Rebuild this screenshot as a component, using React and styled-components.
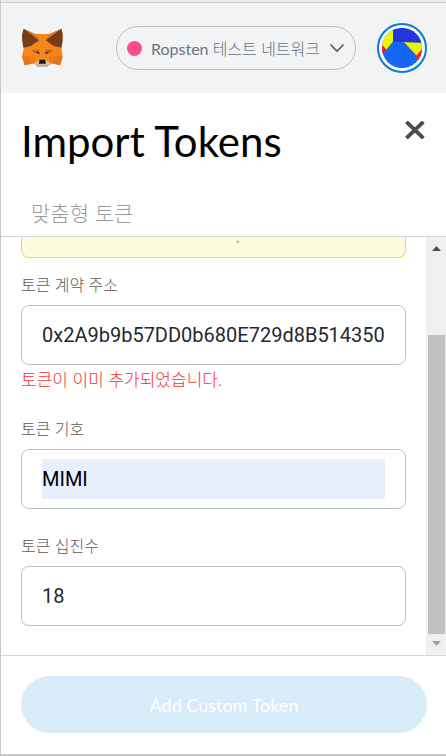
import { useState } from "react"
import styled, { createGlobalStyle } from "styled-components"

export default function App() {
    const [address, setAddress] = useState("0x2A9b9b57DD0b680E729d8B514350")
    const [symbol, setSymbol] = useState("MIMI")
    const [decimals, setDecimals] = useState("18")

    return (
        <Popup>
            <GlobalStyle />
            <TopEdge />
            <AppHeader>
                <FoxLogo />
                <Network type="button">
                    <Dot />
                    <span>Ropsten <em>테스트 네트워크</em></span>
                    <svg width="16" height="10" viewBox="0 0 16 10" fill="none" stroke="#4d5157" strokeWidth="1.6">
                        <path d="M1.5 1.5L8 8.2l6.5-6.7" />
                    </svg>
                </Network>
                <Account type="button" aria-label="Account">
                    <Jazzicon />
                </Account>
            </AppHeader>

            <PageHeader>
                <TitleRow>
                    <h1>Import Tokens</h1>
                    <Close type="button" aria-label="Close">
                        <svg width="20" height="18" viewBox="0 0 20 18" stroke="#4d4d4d" strokeWidth="3.8">
                            <path d="M1.4 0.8l17 16.4M18.4 0.8L1.4 17.2" />
                        </svg>
                    </Close>
                </TitleRow>
                <Tab type="button">맞춤형 토큰</Tab>
            </PageHeader>

            <Content>
                <Form>
                    <Notice>
                        <a href="#more">,</a>
                    </Notice>
                    <Fields>
                        <Field>
                            <label htmlFor="address">토큰 계약 주소</label>
                            <InputBox>
                                <input id="address" value={address} onChange={(e) => setAddress(e.target.value)} />
                            </InputBox>
                            <ErrorText>토큰이 이미 추가되었습니다.</ErrorText>
                        </Field>
                        <Field>
                            <label htmlFor="symbol">토큰 기호</label>
                            <InputBox $filled>
                                <input id="symbol" value={symbol} onChange={(e) => setSymbol(e.target.value)} />
                            </InputBox>
                        </Field>
                        <Field>
                            <label htmlFor="decimals">토큰 십진수</label>
                            <InputBox>
                                <input id="decimals" value={decimals} onChange={(e) => setDecimals(e.target.value)} />
                            </InputBox>
                        </Field>
                    </Fields>
                </Form>
                <ScrollBar>
                    <Arrow viewBox="0 0 9 5" fill="#505050"><path d="M0 5L4.5 0 9 5z" /></Arrow>
                    <Thumb />
                    <Arrow viewBox="0 0 9 5" fill="#a3a3a3"><path d="M0 0l4.5 5L9 0z" /></Arrow>
                </ScrollBar>
            </Content>

            <Footer>
                <button type="button" disabled>Add Custom Token</button>
            </Footer>
        </Popup>
    )
}

function FoxLogo() {
    return (
        <svg width="42" height="40" viewBox="63 84 126 120" role="img" aria-label="MetaMask">
            <path fill="#f6851b" d="M71 86l34 16h44l35-16 4 18-4 38 4 27-7 27-26-7-14 11h-27l-14-11-26 7-8-27 6-28-6-24z" />
            <path fill="#e4761b" d="M71 86l34 16 12 19zM184 86l-35 16-12 19z" />
            <path fill="#763d16" d="M71 86l46 35-24 17-23 5-3-20-1-19zM184 86l-47 35 24 17 23 5 4-20v-19z" />
            <path fill="#e4761b" d="M66 169h24l13 21-29 6zM188 169h-23l-13 21 29 6z" />
            <path fill="#cd6116" d="M93 170l10-1 3 14zM162 170l-10-1-3 14zM96 150l21-1 3 15-22-8zM158 150l-21-1-3 15 22-8z" />
            <path fill="#f6851b" d="M90 147l14 25-1 5-13-7zM164 147l-13 25 1 5 12-7z" />
            <path fill="#233447" d="M107 158l8-3 4 7zM147 158l-8-3-4 7z" />
            <path fill="#d7c1b3" d="M103 189l14-7h21l13 7-11 11h-25z" />
            <path fill="#c0ad9e" d="M103 189l12 5h25l11-5-11 12h-25z" />
            <path fill="#161616" d="M119 179h16l3 12h-22z" />
        </svg>
    )
}

function Jazzicon() {
    return (
        <svg width="40" height="40" viewBox="0 0 40 40">
            <clipPath id="round"><circle cx="20" cy="20" r="20" /></clipPath>
            <g clipPath="url(#round)">
                <path fill="#1765f3" d="M0 0h40v40H0z" />
                <path fill="#fb1d26" d="M0 14l5 7-5 6zM40 20v12h-4l-3-5z" />
                <path fill="#ecf400" d="M0 0h11v13.500L4.500 21.500 0 17zM22 14l18 .5V21l-5.500 6.500z" />
                <path fill="#2335e0" d="M11 0h29v14.700l-29-1.200z" />
            </g>
        </svg>
    )
}

const GlobalStyle = createGlobalStyle`
  * {
    box-sizing: border-box;
  }

  body {
    margin: 0;
    background-color: #fff;
    font-family: Lato, "Noto Sans CJK KR", sans-serif;
  }

  button, input {
    font-family: inherit;
  }

  button {
    cursor: pointer;
  }
`
const Popup = styled.div`
  min-height: 100vh;
  display: flex;
  flex-direction: column;
  border-left: 1px solid #c9c9c9;
  border-bottom: 2px solid #c9c9c9;
`
const TopEdge = styled.div`
  height: 3px;
  background-color: #ececee;
  border-bottom: 1px solid #cbcbcb;
`
const AppHeader = styled.header`
  height: 90px;
  padding: 0 19px 0 20px;
  background-color: #f2f3f4;
  display: flex;
  align-items: center;
  justify-content: space-between;
`
const Network = styled.button`
  height: 44px;
  margin-left: 32px;
  padding: 0 10px;
  display: flex;
  align-items: center;
  gap: 9px;
  background: none;
  border: 1px solid #bbc0c5;
  border-radius: 22px;
  color: #6a737d;
  font-size: 16px;
  white-space: nowrap;

  em {
    font-style: normal;
    font-weight: 300;
  }
`
const Dot = styled.i`
  width: 15px;
  height: 15px;
  border-radius: 50%;
  background-color: #ff4a8d;
`
const Account = styled.button`
  width: 50px;
  height: 50px;
  padding: 0;
  display: flex;
  align-items: center;
  justify-content: center;
  background-color: #fafafa;
  border: 2px solid #037dd6;
  border-radius: 50%;
`
const PageHeader = styled.div`
  padding: 20px 20px 0;
  border-bottom: 1px solid #d2d8dd;
`
const TitleRow = styled.div`
  display: flex;
  justify-content: space-between;
  align-items: flex-start;

  h1 {
    margin: 0;
    color: #000;
    font-size: 42px;
    line-height: 56px;
    font-weight: 400;
  }
`
const Close = styled.button`
  padding: 8px 1px;
  display: flex;
  background: none;
  border: none;
`
const Tab = styled.button`
  height: 47px;
  margin-top: 20px;
  padding: 0 10px 2px;
  background: none;
  border: none;
  color: #9b9b9b;
  font-size: 21px;
  font-weight: 300;
`
const Content = styled.main`
  flex: 1;
  display: flex;
`
const Form = styled.form`
  flex: 1;
  min-width: 0;
  padding: 0 20px 20px;
`
const Notice = styled.div`
  height: 21px;
  background-color: #fefcde;
  border: 1px solid #ffd33d;
  border-top: none;
  border-radius: 0 0 8px 8px;
  text-align: center;
  font-size: 12px;
  line-height: 1px;

  a {
    margin-left: 48px;
    color: #2f5fc0;
    text-decoration: none;
  }
`
const Fields = styled.div`
  margin-top: 15px;
  display: flex;
  flex-direction: column;
  gap: 25px;
`
const Field = styled.div`
  label {
    display: block;
    margin-bottom: 9px;
    color: #5b5b5b;
    font-size: 16px;
    line-height: 23px;
    font-weight: 300;
  }
`
const InputBox = styled.div`
  height: 60px;
  padding: 0 20px;
  display: flex;
  align-items: center;
  border: 1px solid #bbc0c5;
  border-radius: 8px;

  input {
    width: 100%;
    height: 40px;
    padding: 0;
    border: none;
    outline: none;
    background-color: ${(props) => (props.$filled ? "#e8f0fe" : "#fff")};
    color: ${(props) => (props.$filled ? "#000" : "#24292e")};
    font-family: Roboto, sans-serif;
    font-size: 20px;
  }
`
const ErrorText = styled.p`
  margin: 3px 0 0;
  color: #f72e2e;
  font-size: 17px;
  line-height: 24px;
  font-weight: 300;
`
const ScrollBar = styled.div`
  width: 20px;
  padding: 9px 0;
  display: flex;
  flex-direction: column;
  align-items: center;
  gap: 7px;
  background-color: #f0f0f0;
`
const Arrow = styled.svg`
  width: 9px;
  height: 5px;
  flex-shrink: 0;
`
const Thumb = styled.div`
  width: 17px;
  flex: 1;
  margin-top: 77px;
  background-color: #c1c1c1;
`
const Footer = styled.footer`
  padding: 20px 19px 21px 20px;
  border-top: 1px solid #d2d8dd;

  button {
    display: block;
    width: 100%;
    height: 57px;
    border: none;
    border-radius: 29px;
    background-color: #d7ebf9;
    color: #fff;
    font-size: 18px;
    cursor: default;
  }
`
